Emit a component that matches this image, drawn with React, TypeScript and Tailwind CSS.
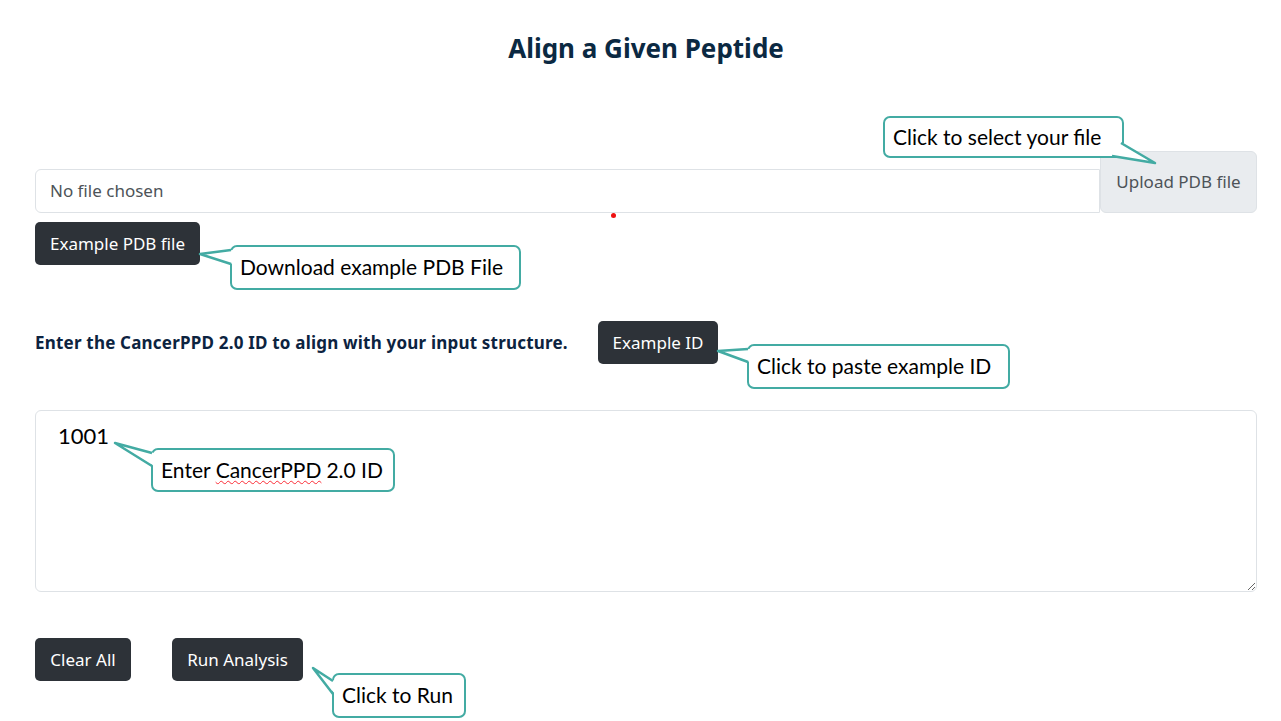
import React from "react";

type Pt = [number, number];

const TEAL = "#43aba3";

function Callout({ x, y, w, h, tip, a, b, children }: { x: number; y: number; w: number; h: number; tip: Pt; a: Pt; b: Pt; children: React.ReactNode }) {
    return (
        <>
            <div
                className="absolute flex items-center rounded-[7px] border-[2.5px] border-[#43aba3] bg-white pl-[8px] pb-[2px] text-[21px] leading-none text-black font-['Lato',sans-serif]"
                style={{ left: x, top: y, width: w, height: h }}
            >
                {children}
            </div>
            <svg className="absolute left-0 top-0 pointer-events-none" width={1281} height={721}>
                <polygon points={`${a[0] + 2},${a[1]} ${tip[0]},${tip[1]} ${b[0] + 2},${b[1]}`} fill="white" />
                <polyline points={`${a[0]},${a[1]} ${tip[0]},${tip[1]} ${b[0]},${b[1]}`} fill="none" stroke={TEAL} strokeWidth={2.5} strokeLinejoin="round" />
            </svg>
        </>
    );
}

const btn = "h-[43px] rounded-[5px] bg-[#2d3238] text-white text-[17px] font-['Noto_Sans',sans-serif] flex items-center justify-center";

export default function App() {
    return (
        <div className="relative w-[1281px] h-[721px] overflow-hidden bg-white font-['Noto_Sans',sans-serif]">
            <div className="pl-[35px] pr-[24px] pt-[32px]">
                <h1 className="text-center text-[26px] leading-[32px] font-bold text-[#0b2942]">Align a Given Peptide</h1>

                <div className="mt-[87px] flex items-end">
                    <div className="flex-1 h-[44px] flex items-center pl-[14px] border border-[#dee2e6] rounded-l-[6px] text-[17px] text-[#4d5358]">
                        No file chosen
                    </div>
                    <div className="w-[157px] h-[62px] flex items-center justify-center bg-[#e9ecef] border border-[#dee2e6] rounded-[6px] text-[17px] text-[#4d5358]">
                        Upload PDB file
                    </div>
                </div>

                <button className={`${btn} mt-[9px] w-[165px]`}>Example PDB file</button>

                <div className="mt-[56px] flex items-center">
                    <p className="w-[563px] text-[17px] font-bold tracking-[0.2px] text-[#0c2340]">
                        Enter the CancerPPD 2.0 ID to align with your input structure.
                    </p>
                    <button className={`${btn} w-[120px] h-[42px]`}>Example ID</button>
                </div>

                <textarea
                    readOnly
                    defaultValue="1001"
                    className="mt-[46px] block w-full h-[182px] border border-[#dee2e6] rounded-[6px] pl-[22px] pt-[8px] text-[22px] text-black font-['Lato',sans-serif] outline-none"
                />

                <div className="mt-[46px] flex gap-[41px]">
                    <button className={`${btn} w-[96px]`}>Clear All</button>
                    <button className={`${btn} w-[131px]`}>Run Analysis</button>
                </div>
            </div>

            <div className="absolute left-[611px] top-[213px] w-[5px] h-[5px] rounded-full bg-[#e11]" />

            <Callout x={883} y={116} w={241} h={42} tip={[1155, 163]} a={[1121, 143]} b={[1112, 156]}>
                Click to select your file
            </Callout>
            <Callout x={230} y={245} w={291} h={45} tip={[200, 254]} a={[231, 250]} b={[231, 264]}>
                Download example PDB File
            </Callout>
            <Callout x={747} y={344} w={263} h={45} tip={[718, 351]} a={[748, 349]} b={[748, 362]}>
                Click to paste example ID
            </Callout>
            <Callout x={151} y={448} w={244} h={44} tip={[115, 443]} a={[152, 453]} b={[152, 466]}>
                Enter <span className="underline decoration-wavy decoration-red-500 decoration-1 underline-offset-2 mx-[5px]">CancerPPD</span> 2.0 ID
            </Callout>
            <Callout x={332} y={673} w={134} h={45} tip={[313, 668]} a={[333, 681]} b={[333, 694]}>
                Click to Run
            </Callout>
        </div>
    );
}
